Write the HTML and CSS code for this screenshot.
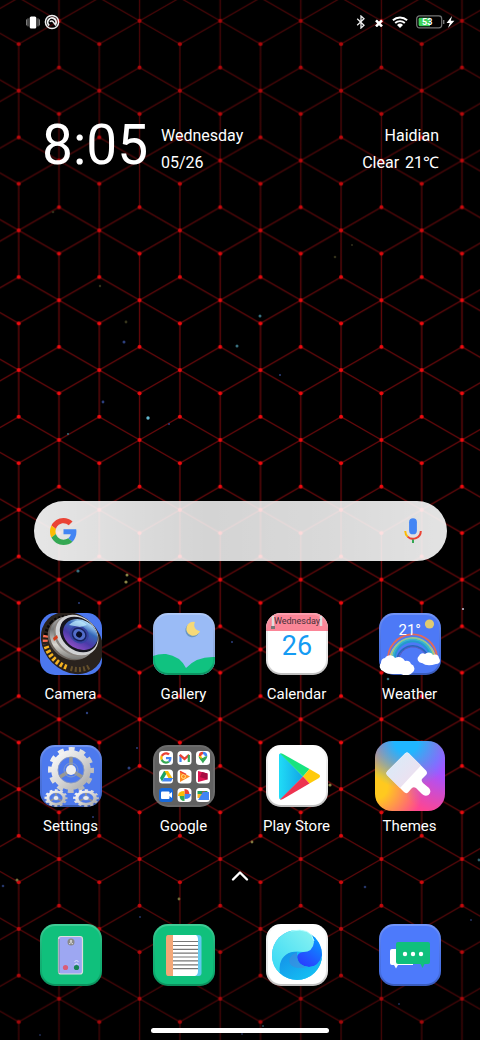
FILE: index.html
```html
<!DOCTYPE html>
<html lang="en">
<head>
<meta charset="utf-8">
<meta name="viewport" content="width=device-width, initial-scale=1">
<title>Home screen</title>
<link rel="stylesheet" href="styles.css">
</head>
<body>
<svg class="wallpaper" aria-hidden="true">
  <defs>
    <pattern id="mesh" width="80.6" height="139.7" patternUnits="userSpaceOnUse" patternTransform="translate(18.7 90.7)">
      <path d="M0 0V46.6M80.6 0V46.6M0 93.1V139.7M80.6 93.1V139.7M40.3 23.2V116.5M0 0L40.3 23.2L80.6 0M0 46.6L80.6 93.1M80.6 46.6L0 93.1M0 139.7L40.3 116.5L80.6 139.7" fill="none" stroke="#cc0f14" stroke-opacity=".5" stroke-width="1.3"/>
      <g fill="#f00a0e">
        <circle cx="0" cy="0" r="2"/><circle cx="80.6" cy="0" r="2"/><circle cx="0" cy="139.7" r="2"/><circle cx="80.6" cy="139.7" r="2"/>
        <circle cx="0" cy="46.6" r="2"/><circle cx="80.6" cy="46.6" r="2"/><circle cx="0" cy="93.1" r="2"/><circle cx="80.6" cy="93.1" r="2"/>
        <circle cx="40.3" cy="23.2" r="2"/><circle cx="40.3" cy="69.9" r="2"/><circle cx="40.3" cy="116.5" r="2"/>
      </g>
    </pattern>
    <linearGradient id="fade" x1="0" y1="0" x2="0" y2="1">
      <stop offset="0" stop-opacity=".3"/><stop offset=".17" stop-opacity=".2"/><stop offset=".3" stop-opacity="0"/><stop offset=".75" stop-opacity="0"/><stop offset=".88" stop-opacity=".2"/><stop offset="1" stop-opacity=".35"/>
    </linearGradient>
  </defs>
  <rect width="100%" height="100%" fill="#000"/>
  <rect width="100%" height="100%" fill="url(#mesh)"/>
  <g fill="#2c3f7c">
    <circle cx="124" cy="342" r="1.5"/><circle cx="103" cy="402" r="1.4"/><circle cx="169" cy="424" r="1"/><circle cx="280" cy="375" r="1"/><circle cx="79" cy="603" r="1"/><circle cx="232" cy="642" r="1"/><circle cx="87" cy="713" r="1.2"/><circle cx="137" cy="748" r="1"/><circle cx="129" cy="768" r="1.5"/><circle cx="93" cy="817" r="1"/><circle cx="365" cy="887" r="1.3"/><circle cx="471" cy="920" r="1"/><circle cx="140" cy="917" r="1"/><circle cx="399" cy="1004" r="1"/><circle cx="242" cy="1034" r="1"/><circle cx="40" cy="1035" r="1"/><circle cx="3" cy="886" r="1.3"/>
  </g>
  <g fill="#386f7e">
    <circle cx="237" cy="346" r="1.5"/><circle cx="260" cy="316" r="1.5"/><circle cx="68" cy="434" r="1"/><circle cx="78" cy="571" r="1.6"/><circle cx="388" cy="679" r="1.3"/><circle cx="263" cy="1026" r="1"/><circle cx="479" cy="860" r="1.4"/>
  </g>
  <circle cx="148" cy="418" r="1.7" fill="#62b8cf"/>
  <circle cx="463" cy="609" r="1.1" fill="#bbc"/>
  <g fill="#37351c"><circle cx="126" cy="322" r="1.4"/><circle cx="100" cy="286" r="1.2"/><circle cx="53" cy="212" r="1.3"/><circle cx="335" cy="257" r="1.3"/><circle cx="352" cy="245" r="1"/></g>
  <g fill="#8b8546"><circle cx="127" cy="575" r="1.5"/><circle cx="126" cy="582" r="1.6"/><circle cx="252" cy="842" r="1.4"/><circle cx="17" cy="880" r="1.5"/><circle cx="179" cy="899" r="1.4"/><circle cx="330" cy="785" r="1.6"/></g>
  <rect width="100%" height="100%" fill="url(#fade)"/>
</svg>

<div class="screen">
  <header class="status">
    <div class="status-group">
      <svg class="status-ring" viewBox="0 0 14 14" role="img" aria-label="Vibrate"><rect x="3.7" y="1.4" width="6.6" height="12" rx="1.5" fill="#fff"/><path d="M2 3.400v8M12 3.400v8M.6 4.400v6M13.4 4.400v6" stroke="#aaa" stroke-width=".8"/></svg>
      <svg class="status-app" viewBox="0 0 16 16" role="img" aria-label="Notification"><circle cx="8" cy="8" r="6.6" fill="none" stroke="#eee" stroke-width="1.5"/><path d="M5.200 11.400A4.200 4.200 0 1 1 11.600 10.200" fill="none" stroke="#eee" stroke-width="1.900"/><path d="M5.800 7.600Q8 6 9.600 8.400L12 11.400" stroke="#eee" stroke-width="1.600" fill="none"/></svg>
    </div>
    <div class="status-group status-right">
      <svg class="status-bt" viewBox="0 0 10 14" role="img" aria-label="Bluetooth"><path d="M1.200 3.800L8 10.200 5 13V1l3 2.800L1.200 10.200" fill="none" stroke="#eee" stroke-width="1.300"/></svg>
      <svg class="status-x" viewBox="0 0 10 10" role="img" aria-label="No SIM"><path d="M2 3.400l6 6M8 3.400l-6 6" stroke="#fff" stroke-width="2.600"/></svg>
      <svg class="status-wifi" viewBox="0 0 16 12" role="img" aria-label="Wi-Fi"><path d="M.9 4.3a10.3 10.3 0 0 1 14.2 0M3.2 7a7 7 0 0 1 9.6 0" fill="none" stroke="#fff" stroke-width="1.9"/><path d="M5 9a4.4 4.4 0 0 1 6 0l-3 3z" fill="#fff"/></svg>
      <svg class="status-battery" viewBox="0 0 40 14" role="img" aria-label="Battery 53 percent, charging"><rect x=".7" y=".9" width="25" height="12" rx="2.8" fill="#000" stroke="#777" stroke-width="1.2"/><path d="M4 2.8h10v8.4H4a1.4 1.4 0 0 1-1.4-1.4V4.2A1.4 1.4 0 0 1 4 2.8z" fill="#3fd35c"/><path d="M27.7 5v4" stroke="#777" stroke-width="1.4"/><text x="11.200" y="10.4" class="battery-text">53</text><path d="M36 1l-5.4 7h3.2L32 13l6.4-7.3h-3.6z" fill="#fff"/></svg>
    </div>
  </header>

  <section class="widget" aria-label="Clock and weather">
    <time class="clock">8:05</time>
    <div class="info"><div>Wednesday</div><div>05/26</div></div>
    <div class="info info-right"><div>Haidian</div><div class="forecast"><span>Clear</span><span>21℃</span></div></div>
  </section>

  <form class="search">
    <svg class="google-logo" viewBox="0 0 48 48" aria-hidden="true">
      <g id="g-logo">
      <path fill="#ea4335" d="M24 9.5c3.54 0 6.71 1.22 9.21 3.6l6.85-6.85C35.9 2.38 30.47 0 24 0 14.62 0 6.51 5.38 2.56 13.22l7.98 6.19C12.43 13.72 17.74 9.5 24 9.5z"/>
      <path fill="#4285f4" d="M46.98 24.55c0-1.57-.15-3.09-.38-4.55H24v9.02h12.94c-.58 2.96-2.26 5.48-4.78 7.18l7.73 6c4.51-4.18 7.09-10.36 7.09-17.65z"/>
      <path fill="#fbbc05" d="M10.53 28.59c-.48-1.45-.76-2.99-.76-4.59s.27-3.14.76-4.59l-7.98-6.19C.92 16.46 0 20.12 0 24c0 3.88.92 7.54 2.56 10.78l7.97-6.19z"/>
      <path fill="#34a853" d="M24 48c6.48 0 11.93-2.13 15.89-5.81l-7.73-6c-2.15 1.45-4.92 2.3-8.16 2.3-6.26 0-11.57-4.22-13.47-9.91l-7.98 6.19C6.51 42.62 14.62 48 24 48z"/>
      </g>
    </svg>
    <input class="search-input" type="search" aria-label="Search">
    <button class="mic" type="button" aria-label="Voice search">
      <svg viewBox="0 0 20 26"><rect x="6.1" y=".3" width="7.8" height="16" rx="3.9" fill="#4285f4"/><path d="M2.2 13a7.8 7.8 0 0 0 2.6 5.8" fill="none" stroke="#fbbc05" stroke-width="2"/><path d="M4.6 18.6A7.8 7.8 0 0 0 17.8 13" fill="none" stroke="#ea4335" stroke-width="2"/><path d="M10 21.4V25" stroke="#34a853" stroke-width="2"/></svg>
    </button>
  </form>

  <main class="apps">
    <a class="app" href="#camera">
      <svg class="icon" viewBox="0 0 62 62" aria-hidden="true">
        <defs>
          <linearGradient id="silver" x1="0" y1="0" x2="1" y2="1"><stop offset="0" stop-color="#ddd"/><stop offset=".35" stop-color="#777"/><stop offset=".6" stop-color="#d8d5cf"/><stop offset="1" stop-color="#444"/></linearGradient>
          <linearGradient id="iris" x1="0" y1="0" x2="0" y2="1"><stop offset="0" stop-color="#b5e2ff"/><stop offset=".3" stop-color="#3568b8"/><stop offset=".65" stop-color="#4b3aa8"/><stop offset="1" stop-color="#8a4ec4"/></linearGradient>
          <clipPath id="tile"><rect width="62" height="62" rx="15"/></clipPath>
        </defs>
        <g clip-path="url(#tile)">
          <rect width="62" height="62" fill="#4c78ef"/>
          <g transform="translate(32 30) rotate(45)" fill="none" stroke-width="5">
            <ellipse cx="0" cy="0" rx="34" ry="28" fill="#29221d"/>
            <path d="M-28 0A28 23 0 0 1 -18 -17.600" stroke="#080706" stroke-dasharray="2.200 1.600"/>
            <path d="M-28 0A28 23 0 0 0 -21.400 14.800" stroke="#080706" stroke-dasharray="2.200 1.600"/>
            <path d="M-24 13A28 23 0 0 0 -18 19.500" stroke="#ff6d50" stroke-dasharray="2.400 2"/>
            <path d="M-16 20.500A28 23 0 0 0 14 20.500" stroke="#f5b321" stroke-dasharray="2.600 2"/>
            <path d="M17 19A28 23 0 0 0 29 4" stroke="#65502b" stroke-dasharray="2 2.200"/>
          </g>
          <g transform="rotate(38 35 23)">
            <ellipse cx="33" cy="28" rx="24" ry="20" fill="#6b625c"/>
            <ellipse cx="34" cy="26" rx="24" ry="20" fill="url(#silver)"/>
            <ellipse cx="35" cy="23" rx="23" ry="18.500" fill="#8b8580"/>
            <ellipse cx="36" cy="21" rx="23" ry="18.500" fill="#d0d1d3"/>
            <ellipse cx="37" cy="19.500" rx="20.500" ry="16" fill="#15151f"/>
          </g>
          <g transform="rotate(30 40 22)">
            <ellipse cx="40" cy="21.500" rx="18" ry="14.500" fill="url(#iris)"/>
            <ellipse cx="39" cy="22" rx="10" ry="8.500" fill="#3743a2"/>
            <ellipse cx="39" cy="22" rx="7" ry="6" fill="#526dca" stroke="#17225e" stroke-width="1.500"/>
            <ellipse cx="39" cy="22" rx="3" ry="3" fill="#080c28"/>
          </g>
          <path d="M29 12q9-9 18 0l-7 2z" fill="#c5f1ff" opacity=".7"/>
          <path d="M13 25l4-3 1 3-4 3z" fill="#d43d1b"/>
        </g>
      </svg>
      <span>Camera</span>
    </a>

    <a class="app" href="#gallery">
      <svg class="icon" viewBox="0 0 62 62" aria-hidden="true">
        <g clip-path="url(#tile)"><rect width="62" height="62" fill="#9abbf6"/>
        <path d="M0 43Q6 40.500 13 41Q27 43 33 55Q44 43 62 44V62H0z" fill="#10c280"/></g>
        <path d="M42 9a7 7 0 1 0 5 9a6 6 0 0 1-5-9z" fill="#6b97c0" transform="translate(-1 1.500)"/>
        <path d="M42 9a7 7 0 1 0 5 9a6 6 0 0 1-5-9z" fill="#f6d978"/>
        <use href="#bevel"/>
      </svg>
      <span>Gallery</span>
    </a>

    <a class="app" href="#calendar">
      <svg class="icon" viewBox="0 0 62 62" aria-hidden="true">
        <defs>
          <linearGradient id="bevel-edge" x1="0" y1="0" x2="0" y2="1"><stop offset="0" stop-color="#fff" stop-opacity=".2"/><stop offset=".3" stop-color="#888" stop-opacity=".15"/><stop offset=".8" stop-color="#000" stop-opacity=".1"/><stop offset="1" stop-color="#000" stop-opacity=".25"/></linearGradient>
          <rect id="bevel" x="1" y="1" width="60" height="60" rx="14" fill="none" stroke="url(#bevel-edge)" stroke-width="2"/>
        </defs>
        <g clip-path="url(#tile)"><rect width="62" height="62" fill="#fff"/><rect width="62" height="18" fill="#fb8597"/></g>
        <path d="M7 3v11M55 3v10" stroke="#ddd" stroke-width="2.500"/><path d="M5 13h4v3H5z" fill="#777"/>
        <text class="calendar-day" x="31" y="11">Wednesday</text>
        <text class="calendar-date" x="31" y="41.500">26</text>
        <use href="#bevel"/>
      </svg>
      <span>Calendar</span>
    </a>

    <a class="app" href="#weather">
      <svg class="icon" viewBox="0 0 62 62" aria-hidden="true">
        <rect width="62" height="62" rx="15" fill="#4d79f6"/>
        <circle cx="50.500" cy="11" r="4.600" fill="#e0ca70"/>
        <g fill="none" stroke-width="1.800">
          <path d="M9 48A24.500 24.500 0 0 1 58 44" stroke="#e2695c"/>
          <path d="M11 48A22.700 22.700 0 0 1 56 44" stroke="#edb95d"/>
          <path d="M12.600 48A21 21 0 0 1 54.500 44" stroke="#91c795"/>
          <path d="M14.400 48A19.300 19.300 0 0 1 53 44" stroke="#36b7cd"/>
          <path d="M16 48A17.600 17.600 0 0 1 51 44" stroke="#249bcd"/>
          <path d="M17.800 48A16 16 0 0 1 49 44" stroke="#2468bc"/>
          <path d="M19.500 48A14.300 14.300 0 0 1 47.500 44" stroke="#5957bd" stroke-width="1"/>
        </g>
        <use href="#bevel"/>
        <path d="M4 58A5 5 0 0 1 2 50A5 5 0 0 1 6 45A6 6 0 0 1 16 45A7 7 0 0 1 26 48A5 5 0 0 1 32 51A5 5 0 0 1 33 60A10 10 0 0 1 22 61H13Q7 61 4 58z" fill="#fff"/>
        <path d="M43 50A4 4 0 0 1 40 43A4 4 0 0 1 46 41A5 5 0 0 1 54 42A4 4 0 0 1 60 45Q63 50 57 51Q48 54 43 50z" fill="#fff"/>
        <text class="weather-temp" x="19.500" y="22">21°</text>
      </svg>
      <span>Weather</span>
    </a>

    <a class="app" href="#settings">
      <svg class="icon" viewBox="0 0 62 62" aria-hidden="true">
        <defs>
          <linearGradient id="steel" x1="0" y1="0" x2="1" y2="1"><stop offset="0" stop-color="#fafafa"/><stop offset=".5" stop-color="#d8d8d8"/><stop offset="1" stop-color="#aaa"/></linearGradient>
          <g id="gear">
            <circle cx="0" cy="0" r="20" fill="none" stroke="url(#steel)" stroke-width="6" stroke-dasharray="5.700 4.770" stroke-dashoffset="2.800"/>
            <circle cx="0" cy="0" r="16.500" fill="none" stroke="url(#steel)" stroke-width="6.500"/>
            <circle cx="0" cy="0" r="13" fill="none" stroke="#aaa" stroke-width=".6"/>
            <path d="M0 0V-13M0 0L-11 7M0 0L11 7" stroke="#999890" stroke-width="3.600"/>
            <circle cx="0" cy="0" r="7" fill="none" stroke="#8299c8" stroke-width="1"/>
            <circle cx="0" cy="0" r="5" fill="#eee"/>
          </g>
        </defs>
        <rect width="62" height="62" rx="15" fill="#4d79ed"/>
        <use href="#bevel"/>
        <use href="#gear" transform="translate(31 25)"/>
        <use href="#gear" transform="translate(16 53) scale(.5 .38)"/>
        <use href="#gear" transform="translate(46 53) scale(.56 .38)"/>
      </svg>
      <span>Settings</span>
    </a>

    <a class="app" href="#google">
      <svg class="icon" viewBox="0 0 62 62" aria-hidden="true">
        <rect width="62" height="62" rx="15" fill="#777" fill-opacity=".9"/>
        <rect x="2" y="2" width="58" height="58" rx="13" fill="#5d5d5d" fill-opacity=".75"/>
        <g fill="#fff">
          <rect x="6" y="6" width="14" height="14" rx="3.500"/><rect x="24.500" y="6" width="14" height="14" rx="3.500"/><rect x="43" y="6" width="14" height="14" rx="3.500"/>
          <rect x="6" y="24.500" width="14" height="14" rx="3.500"/><rect x="24.500" y="24.500" width="14" height="14" rx="3.500"/><rect x="43" y="24.500" width="14" height="14" rx="3.500"/>
          <rect x="6" y="43" width="14" height="14" rx="3.500" fill="#1669dc"/><rect x="24.500" y="43" width="14" height="14" rx="3.500"/><rect x="43" y="43" width="14" height="14" rx="3.500"/>
        </g>
        <use href="#g-logo" transform="translate(7.200 7.200) scale(.24)"/>
        <path d="M27.500 17V10" stroke="#4285f4" stroke-width="2.200"/><path d="M26.800 9.800l4.700 4 4.700-4" fill="none" stroke="#ea4335" stroke-width="2.400"/><path d="M35.800 17v-7" stroke="#34a853" stroke-width="2.200"/>
        <path d="M50 18.600c-1-3-4.300-4.500-4.300-7.700L50 13z" fill="#34a853"/><path d="M45.700 11a4.300 4.300 0 0 1 4.300-4.200V12z" fill="#ea4335"/><path d="M50 6.800a4.300 4.300 0 0 1 4.300 4.200H50z" fill="#4285f4"/><path d="M54.300 11c0 3-3.200 4.600-4.300 7.600V12z" fill="#34a853"/><path d="M45.700 11l2.500 3L50 11z" fill="#fbbc05"/><circle cx="50" cy="11" r="1.700" fill="#fff"/>
        <path d="M11 26h4l-6 10.500L7 33z" fill="#1da462"/><path d="M11.500 26H15l5 8h-4z" fill="#fbbc05"/><path d="M11 33h9l-2 3.500H9z" fill="#4285f4"/>
        <path d="M27 26v11l10-5.500z" fill="#ff8b22"/><circle cx="30.500" cy="31.500" r="2" fill="none" stroke="#ffe083" stroke-width="1"/><path d="M27 26.400l6 3" stroke="#ee4335" stroke-width="1.500"/>
        <path d="M45 26l9.500 2.500V34.500L45 37z" fill="#df1552"/><path d="M49 27l5.500 1.500V34.500L47 32z" fill="#a70d43"/>
        <rect x="8" y="46.500" width="8.500" height="7.500" rx="1" fill="#fff"/><path d="M15 50l4-3v6z" fill="#fff"/>
        <path d="M31.500 50v-6q5 0 5 6z" fill="#ea4335"/><path d="M31.500 50h6.500q0 5-6.500 5z" fill="#4285f4" transform="translate(0 -1)"/><path d="M31.500 50v6q-5 0-5-6z" fill="#34a853"/><path d="M31.500 50h-6.500q0-5 6.500-5z" fill="#fbbc05" transform="translate(0 1)"/>
        <path d="M44.500 46h10v3h-10z" fill="#22a05d"/><path d="M44.500 49h5v4h-5z" fill="#f7b928"/><path d="M49 46.500h3v3h-3z" fill="#e44333"/><path d="M50 47h6v8H45z" fill="#4285f4"/>
      </svg>
      <span>Google</span>
    </a>

    <a class="app" href="#play">
      <svg class="icon" viewBox="0 0 62 62" aria-hidden="true">
        <defs><linearGradient id="play-blue" x1="0" y1="0" x2="1" y2="0"><stop offset="0" stop-color="#20dcf7"/><stop offset="1" stop-color="#12a5e5"/></linearGradient></defs>
        <rect width="62" height="62" rx="15" fill="#fff"/>
        <use href="#bevel"/>
        <path d="M13 10Q13 8 15 9L37 31.500L15 54Q13 55 13 52z" fill="url(#play-blue)"/>
        <path d="M14 8.500Q15 8 17 9L43.500 24L37 31.500z" fill="#17e380"/>
        <path d="M43.500 24L53 29.500Q55 31 53 33L43.500 38.500L37 31.500z" fill="#ffca0b"/>
        <path d="M14 54.500Q15 55 17 54L43.500 38.500L37 31.500z" fill="#ed3350"/>
      </svg>
      <span>Play Store</span>
    </a>

    <a class="app" href="#themes">
      <span class="icon icon-themes">
        <svg viewBox="0 0 70 70" aria-hidden="true">
          <defs><linearGradient id="brush" x1="0" y1="0" x2="1" y2="1"><stop offset="0" stop-color="#d4eefa"/><stop offset="1" stop-color="#f6dced"/></linearGradient></defs>
          <path d="M12.500 30L30 12.500Q32 10.500 34 12.500L51 29.500Q53 32 51 34L47 38Q46 40 48 42L54 47Q57 51 53.500 54Q50 56 47 53L41 47Q38 45 36 48L33 51.500Q31 53 29 51L12 34Q10.500 32 12.500 30z" fill="#fff"/>
          <path d="M12.500 30L30 12.500Q32 10.500 34 12.500L46 24.500L25 47L12 34Q10.500 32 12.500 30z" fill="url(#brush)"/>
        </svg>
      </span>
      <span>Themes</span>
    </a>
  </main>

  <button class="drawer" type="button" aria-label="Open app drawer">
    <svg viewBox="0 0 18 12"><path d="M2 9.500L9 2.500L16 9.500" fill="none" stroke="#fff" stroke-width="2.400" stroke-linecap="round" stroke-linejoin="round"/></svg>
  </button>

  <nav class="apps dock" aria-label="Dock">
    <a class="app" href="#phone" aria-label="Phone">
      <svg class="icon" viewBox="0 0 62 62" aria-hidden="true">
        <rect width="62" height="62" rx="15" fill="#10c07c"/>
        <use href="#bevel"/>
        <rect x="18.500" y="12.500" width="24" height="37.500" rx="2.500" fill="#9da7f2" stroke="#ddd" stroke-width="1.200"/><path d="M19 15V49" stroke="#66708f" stroke-width=".8"/>
        <circle cx="31" cy="18" r="3.500" fill="#888"/><circle cx="31" cy="17" r="1.200" fill="#ccc"/><path d="M29 20q2-3 4 0" fill="none" stroke="#ddd"/>
        <circle cx="25.500" cy="43.500" r="2.600" fill="#d95c78"/><circle cx="36.500" cy="43.500" r="2.600" fill="#178455"/><path d="M34.500 38l2-2 2 2M34.500 41l2-2 2 2" fill="none" stroke="#dfe3ff"/>
      </svg>
    </a>
    <a class="app" href="#notes" aria-label="Notes">
      <svg class="icon" viewBox="0 0 62 62" aria-hidden="true">
        <rect width="62" height="62" rx="15" fill="#10c07c"/>
        <use href="#bevel"/>
        <rect x="30" y="11" width="18.500" height="41" rx="3" fill="#62caef"/>
        <path d="M19 11H43Q45 12 45 15V47Q45 51 42 52H19z" fill="#fff"/>
        <path d="M15 11H20V52H15Q13 52 13 49V14Q13 11 15 11z" fill="#f3a777"/>
        <path d="M20 17.500H45M20 21.500H45M20 25.300H45M20 29.200H45M20 33H45M20 36.900H45M20 40.800H45M20 44.700H45" stroke="#777" stroke-width="1.200"/>
      </svg>
    </a>
    <a class="app" href="#browser" aria-label="Browser">
      <svg class="icon" viewBox="0 0 62 62" aria-hidden="true">
        <defs>
          <linearGradient id="aqua" x1="0" y1="1" x2="1" y2="0"><stop offset="0" stop-color="#35d8f5"/><stop offset="1" stop-color="#8af3f1"/></linearGradient>
          <linearGradient id="deep" x1="0" y1="1" x2=".6" y2="0"><stop offset="0" stop-color="#2635ff"/><stop offset=".35" stop-color="#2450ff"/><stop offset="1" stop-color="#0795ff"/></linearGradient>
          <linearGradient id="swirl" x1="0" y1="0" x2="1" y2="1"><stop offset="0" stop-color="#148de8"/><stop offset="1" stop-color="#15c9f5"/></linearGradient>
        </defs>
        <rect width="62" height="62" rx="15" fill="#fff"/>
        <use href="#bevel"/>
        <circle cx="31" cy="31" r="25" fill="#19baf8"/>
        <path d="M44 10A25 25 0 0 1 56 31Q53 43 43 43Q32 42 31 34Q31 29 37 28Q48 26 44 10z" fill="url(#deep)"/>
        <path d="M14 49Q11 40 17 33Q22 27 31 28Q30 42 43 43Q52 43 56 33A25 25 0 0 1 14 49z" fill="url(#swirl)"/>
        <path d="M31 28Q30 41 41 43Q29 46 24 40Q21 33 31 28z" fill="#4b83da" opacity=".5"/>
        <path d="M6 31A25 25 0 0 1 31 6Q46 6 48 18Q47 28 37 28Q18 25 14 40Q13 45 14 49Q6 43 6 31z" fill="url(#aqua)"/>
        <path d="M25 7Q45 3 48 17" fill="none" stroke="#b7ffff" stroke-width="1"/>
      </svg>
    </a>
    <a class="app" href="#messages" aria-label="Messages">
      <svg class="icon" viewBox="0 0 62 62" aria-hidden="true">
        <rect width="62" height="62" rx="15" fill="#4d7afb"/>
        <use href="#bevel"/>
        <path d="M13 25H34V41H19L17 44.500L15 41H13Q11 41 11 39V27Q11 25 13 25z" fill="#fff"/>
        <path d="M19 18H49Q51 18 51 20V38Q51 40 49 40H45.500L43.500 44L41.500 40H19Q17 40 17 38V20Q17 18 19 18z" fill="#10c07c"/>
        <g fill="#fff"><circle cx="26" cy="30" r="2.200"/><circle cx="34" cy="30" r="2.200"/><circle cx="42" cy="30" r="2.200"/></g>
      </svg>
    </a>
  </nav>

  <div class="home-bar"></div>
</div>
</body>
</html>
```

FILE: styles.css
```css
* {
  box-sizing: border-box;
}

body {
  margin: 0;
  position: relative;
  min-height: 100vh;
  background: #000;
  color: #fff;
  font-family: Roboto, "Noto Sans", sans-serif;
  font-size: 16px;
}

svg {
  display: block;
}

button {
  padding: 0;
  border: 0;
  background: none;
}

.wallpaper {
  position: absolute;
  inset: 0;
  width: 100%;
  height: 100%;
  z-index: -1;
}

.screen {
  display: flex;
  flex-direction: column;
}

.status {
  display: flex;
  justify-content: space-between;
  align-items: center;
  height: 44px;
  padding: 0 24px 0 26px;
}

.status-group {
  display: flex;
  align-items: center;
  gap: 4px;
}

.status-right {
  gap: 8px;
}

.status-ring {
  width: 14px;
  height: 14px;
}

.status-app {
  width: 16px;
  height: 16px;
}

.status-bt {
  width: 10px;
  height: 14px;
}

.status-x {
  width: 10px;
  height: 10px;
}

.status-wifi {
  width: 16px;
  height: 12px;
}

.status-battery {
  width: 40px;
  height: 14px;
}

.battery-text {
  fill: #fff;
  font-size: 9px;
  font-weight: 700;
  text-anchor: middle;
}

.widget {
  display: flex;
  margin-top: 73px;
  padding: 0 41px 0 42px;
}

.clock {
  width: 119px;
  font-size: 55px;
  line-height: 56px;
}

.info {
  margin-top: 5px;
  line-height: 27px;
}

.info-right {
  margin-left: auto;
  text-align: right;
}

.forecast {
  display: flex;
  gap: 6px;
}

.search {
  display: flex;
  align-items: center;
  height: 60px;
  margin: 325px 33px 0 34px;
  padding: 0 24px 0 16px;
  border-radius: 30px;
  background: linear-gradient(90deg, rgba(255, 255, 255, .9), rgba(255, 255, 255, .83) 42%, rgba(255, 255, 255, .85) 70%, rgba(255, 255, 255, .89));
}

.google-logo {
  width: 27px;
  height: 27px;
}

.search-input {
  flex: 1;
  min-width: 0;
  height: 40px;
  border: 0;
  outline: 0;
  background: none;
  font: inherit;
}

.mic {
  width: 20px;
  height: 26px;
}

.apps {
  display: grid;
  grid-template-columns: repeat(4, 1fr);
  row-gap: 41px;
  margin-top: 52px;
  padding: 0 14px;
}

.app {
  display: flex;
  flex-direction: column;
  align-items: center;
  gap: 9px;
  color: #fff;
  font-size: 15px;
  line-height: 20px;
  text-decoration: none;
}

.icon {
  width: 62px;
  height: 62px;
}

.icon-themes {
  width: 70px;
  height: 70px;
  margin: -4px;
  border-radius: 17px;
  background:
    radial-gradient(circle at 45% 0, #20b6ff 15%, transparent 60%),
    radial-gradient(circle at 100% 35%, #a852ff 12%, transparent 60%),
    radial-gradient(circle at 0 65%, #ffc91f 15%, transparent 58%),
    #ff4591;
}

.calendar-day {
  fill: #463038;
  font-size: 9px;
  text-anchor: middle;
}

.calendar-date {
  fill: #159bf3;
  font-size: 27px;
  text-anchor: middle;
}

.weather-temp {
  fill: #fff;
  font-size: 15px;
}

.drawer {
  display: grid;
  place-items: center;
  align-self: center;
  width: 48px;
  height: 24px;
  margin-top: 28px;
}

.drawer svg {
  width: 18px;
  height: 12px;
}

.dock {
  margin-top: 36px;
}

.home-bar {
  align-self: center;
  width: 37%;
  height: 5px;
  margin: 42px 0 7px;
  border-radius: 3px;
  background: #fff;
}
```
